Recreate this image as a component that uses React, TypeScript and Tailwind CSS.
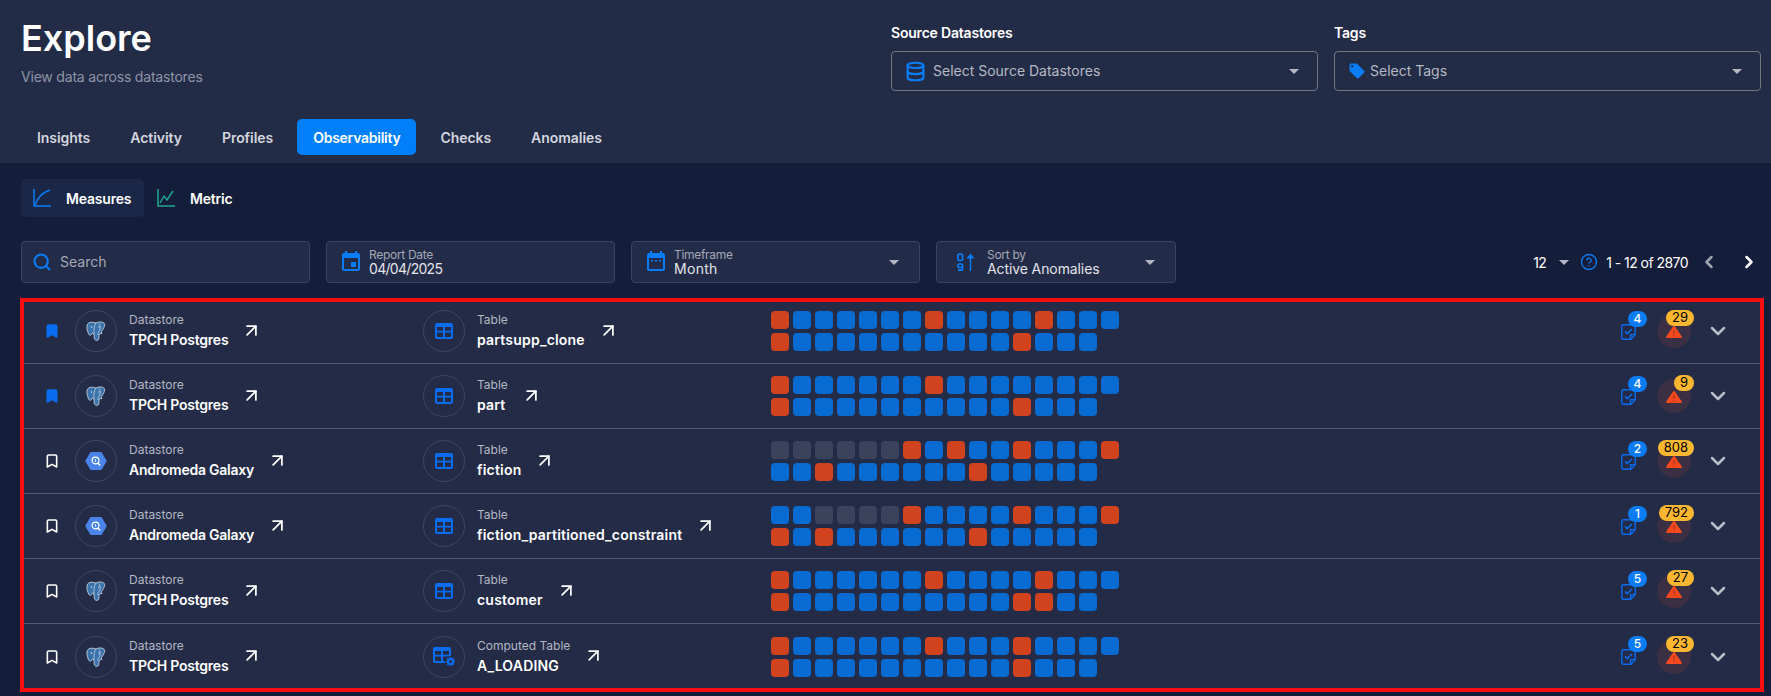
import { ArrowUpRight, Bookmark, ChevronDown, ChevronLeft, ChevronRight, CircleHelp, Database, Search } from 'lucide-react';
import type { ReactNode } from 'react';

const tabs = ['Insights', 'Activity', 'Profiles', 'Observability', 'Checks', 'Anomalies'];

const squareColor: Record<string, string> = {
    O: 'bg-[#d1421e]',
    B: 'bg-[#086bd1]',
    G: 'bg-[#3b435c]',
};

const rows = [
    { saved: true, source: 'pg', store: 'TPCH Postgres', kind: 'Table', name: 'partsupp_clone', top: 'OBBBBBBOBBBBOBBB', bottom: 'OBBBBBBBBBBOBBB', checks: 4, anomalies: 29 },
    { saved: true, source: 'pg', store: 'TPCH Postgres', kind: 'Table', name: 'part', top: 'OBBBBBBOBBBBBBBB', bottom: 'OBBBBBBBBBBOBBB', checks: 4, anomalies: 9 },
    { saved: false, source: 'bq', store: 'Andromeda Galaxy', kind: 'Table', name: 'fiction', top: 'GGGGGGOBOBBOBBBO', bottom: 'BBOBBBBBBOBBBBB', checks: 2, anomalies: 808 },
    { saved: false, source: 'bq', store: 'Andromeda Galaxy', kind: 'Table', name: 'fiction_partitioned_constraint', top: 'BBGGGGOBBBBOBBBO', bottom: 'OBOBBBBBBOBBBBB', checks: 1, anomalies: 792 },
    { saved: false, source: 'pg', store: 'TPCH Postgres', kind: 'Table', name: 'customer', top: 'OBBBBBBOBBBBOBBB', bottom: 'OBBBBBBBBBBOOBB', checks: 5, anomalies: 27 },
    { saved: false, source: 'pg', store: 'TPCH Postgres', kind: 'Computed Table', name: 'A_LOADING', top: 'OBBBBBBOBBBOBBBB', bottom: 'OBBBBBBBBBBOBBB', checks: 5, anomalies: 23 },
];

function Caret() {
    return (
        <svg width="10" height="5" viewBox="0 0 10 5" className="shrink-0">
            <path d="M0 0h10L5 5z" fill="#b4b7c2" />
        </svg>
    );
}

function MeasuresIcon() {
    return (
        <svg width="18" height="18" viewBox="0 0 18 18" fill="none" stroke="#0a7cf5" strokeWidth="1.5">
            <path d="M1 0v17h17" />
            <path d="M2 16C4 10 8 4 17 1" />
        </svg>
    );
}

function MetricIcon() {
    return (
        <svg width="18" height="18" viewBox="0 0 18 18" fill="none" stroke="#1fa58f" strokeWidth="1.5">
            <path d="M1 0v17h17" />
            <path d="M3 14l4-7 3 4 6-9" />
        </svg>
    );
}

function EventIcon() {
    return (
        <svg width="24" height="24" viewBox="0 0 24 24" fill="#0a7cf5">
            <path d="M17 12h-5v5h5v-5zM16 1v2H8V1H6v2H5c-1.11 0-1.99.9-1.99 2L3 19c0 1.1.89 2 2 2h14c1.1 0 2-.9 2-2V5c0-1.1-.9-2-2-2h-1V1h-2zm3 18H5V8h14v11z" />
        </svg>
    );
}

function CalendarIcon() {
    return (
        <svg width="24" height="24" viewBox="0 0 24 24" fill="#0a7cf5">
            <path d="M19 3h-1V1h-2v2H8V1H6v2H5c-1.1 0-2 .9-2 2v14c0 1.1.9 2 2 2h14c1.1 0 2-.9 2-2V5c0-1.1-.9-2-2-2zm0 16H5V8h14v11z" />
            <path d="M7 10h2v1.5H7zM11 10h2v1.5h-2zM15 10h2v1.5h-2z" />
        </svg>
    );
}

function SortIcon() {
    return (
        <svg width="18" height="18" viewBox="0 0 18 18" fill="none" stroke="#0a7cf5">
            <rect x="1" y="1" width="4.5" height="6.5" rx="1" strokeWidth="1.7" />
            <rect x="1" y="11" width="4.5" height="3.5" rx="1" strokeWidth="1.7" />
            <path d="M5.5 13v3.2a1 1 0 0 1-1 1H1" strokeWidth="1.7" />
            <path d="M13.5 18V3" strokeWidth="1.5" />
            <path d="M9.5 5.5L13.5 .5l4 5z" fill="#0a7cf5" stroke="none" />
        </svg>
    );
}

function TagIcon() {
    return (
        <svg width="18" height="18" viewBox="0 0 24 24" fill="#0a7cf5">
            <path d="M21.41 11.58l-9-9C12.05 2.22 11.55 2 11 2H4c-1.1 0-2 .9-2 2v7c0 .55.22 1.05.59 1.42l9 9c.36.36.86.58 1.41.58.55 0 1.05-.22 1.41-.59l7-7c.37-.36.59-.86.59-1.41 0-.55-.23-1.06-.59-1.42zM5.5 7C4.67 7 4 6.33 4 5.5S4.67 4 5.5 4 7 4.67 7 5.5 6.33 7 5.5 7z" />
        </svg>
    );
}

function PostgresIcon() {
    return (
        <svg width="20" height="20" viewBox="0 0 20 20">
            <path d="M10 2C7 .8 3 .8 1.6 3 .3 5 1 9 2.2 12c1 2.5 2.3 3 3.3 1.5l1-1.5c.5.5 1 1 1.5 1l.2 4c.2 2 2.3 3 3.8 2 1.2-.8 1-3 1-5 .5-2 1.5-1 3-1.5-1.2-1-.5-2 .5-3.5 2-3 3-5.5 1.3-7C16 .5 12.5.6 10 2z" fill="#3a72ab" stroke="#d4dde8" strokeWidth=".8" />
            <path d="M10 2C8 5 7.8 8 8 13M12.8 2.5c2.2 2 1.6 6.5-.4 8.5-.6.7-.4 2-.4 3" fill="none" stroke="#d4dde8" strokeWidth=".7" />
            <circle cx="5.5" cy="6" r=".8" fill="#d4dde8" />
            <circle cx="13" cy="6" r=".7" fill="#d4dde8" />
        </svg>
    );
}

function BigQueryIcon() {
    return (
        <svg width="24" height="20" viewBox="0 0 24 20">
            <path d="M1.2 10L6.2 1.4a1 1 0 0 1 .8-.4h10a1 1 0 0 1 .8.4l5 8.6-5 8.6a1 1 0 0 1-.8.4H7a1 1 0 0 1-.8-.4z" fill="#4a84e8" />
            <circle cx="11.5" cy="9.5" r="3.4" fill="none" stroke="#fff" strokeWidth="1.2" />
            <path d="M13.8 12l2.4 2.4" stroke="#fff" strokeWidth="1.4" />
            <path d="M11.5 8v3" stroke="#cfe0fb" strokeWidth="1.1" />
        </svg>
    );
}

function TableIcon() {
    return (
        <svg width="18" height="16" viewBox="0 0 18 16" fill="#0a6cf0">
            <path d="M2 0h14a2 2 0 0 1 2 2v12a2 2 0 0 1-2 2H2a2 2 0 0 1-2-2V2a2 2 0 0 1 2-2zm0 4v3.8h6V4zm8 0v3.8h6V4zM2 9.6V14h6V9.6zm8 0V14h6V9.6z" fillRule="evenodd" />
        </svg>
    );
}

function ComputedTableIcon() {
    return (
        <svg width="23" height="20" viewBox="0 0 23 20" fill="none">
            <path d="M2 0h14a2 2 0 0 1 2 2v12a2 2 0 0 1-2 2H2a2 2 0 0 1-2-2V2a2 2 0 0 1 2-2zm0 4v3.8h6V4zm8 0v3.8h6V4zM2 9.6V14h6V9.6zm8 0V14h6V9.6z" fill="#0a6cf0" fillRule="evenodd" />
            <circle cx="17.5" cy="14.5" r="5.6" fill="#232b47" />
            <circle cx="17.5" cy="14.5" r="2.6" stroke="#0a6cf0" strokeWidth="2" />
            <path d="M17.5 10v1.6M17.5 17.4V19M13 14.5h1.6M20.4 14.5H22M14.3 11.3l1.1 1.1M19.6 16.6l1.1 1.1M14.3 17.7l1.1-1.1M19.6 12.4l1.1-1.1" stroke="#0a6cf0" strokeWidth="1.6" />
        </svg>
    );
}

function CheckNoteIcon() {
    return (
        <svg width="15" height="16" viewBox="0 0 15 16" fill="none" stroke="#0a6cf0" strokeWidth="1.4">
            <path d="M2.2.8h10.6a1.4 1.4 0 0 1 1.4 1.4v8.6L9.8 15.2H2.2a1.4 1.4 0 0 1-1.4-1.4V2.2A1.4 1.4 0 0 1 2.2.8z" />
            <path d="M9.6 15v-4.4H14" />
            <path d="M4 7.4l2.2 2.2L11 5" strokeWidth="1.5" />
        </svg>
    );
}

function WarningIcon() {
    return (
        <svg width="16" height="12" viewBox="0 0 16 12">
            <path d="M7.1.6a1 1 0 0 1 1.8 0l6.9 10a.9.9 0 0 1-.8 1.4H1a.9.9 0 0 1-.8-1.4z" fill="#f4481e" />
            <path d="M7.5 4h1v4h-1zM7.5 9h1v1.2h-1z" fill="#8f2f1c" />
        </svg>
    );
}

function LabeledBox({ icon, label, value, valueClass, caret, className }: { icon: ReactNode; label: string; value: string; valueClass: string; caret?: boolean; className: string }) {
    return (
        <div className={`flex h-[42px] items-center rounded-[4px] border border-[#3a435f] bg-[#222b47] ${className}`}>
            {icon}
            <div className="min-w-0 flex-1">
                <div className="text-[12px] leading-[13px] tracking-[-0.3px] text-[#a4a8b6]">{label}</div>
                <div className={`text-[14px] leading-[16px] text-[#e3e5ea] ${valueClass}`}>{value}</div>
            </div>
            {caret && <Caret />}
        </div>
    );
}

function SelectBox({ label, icon, slot, placeholder }: { label: string; icon: ReactNode; slot: string; placeholder: string }) {
    return (
        <div className="w-[427px]">
            <div className="mb-[8px] h-[20px] text-[14px] font-semibold leading-[20px] tracking-[-0.2px] text-white">{label}</div>
            <div className="flex h-[40px] items-center rounded-[4px] border border-[#72767f] pl-[13px] pr-[18px]">
                <div className={`flex shrink-0 items-center ${slot}`}>{icon}</div>
                <span className="-mt-[2px] flex-1 text-[14px] text-[#b6b9c3]">{placeholder}</span>
                <Caret />
            </div>
        </div>
    );
}

function NameCell({ icon, label, name, nameClass }: { icon: ReactNode; label: string; name: string; nameClass: string }) {
    return (
        <div className="flex w-[348px] shrink-0 items-center">
            <div className="flex size-[42px] shrink-0 items-center justify-center rounded-full border border-[#3d4661]">{icon}</div>
            <div className="ml-[12px]">
                <div className="text-[12px] leading-4 text-[#b4b8c4]">{label}</div>
                <div className={`mt-[2px] text-[14px] font-semibold leading-5 text-white ${nameClass}`}>{name}</div>
            </div>
            <ArrowUpRight size={21} strokeWidth={2} className="-mt-[2px] ml-[13px] shrink-0 text-white" />
        </div>
    );
}

function SquareRow({ pattern }: { pattern: string }) {
    return (
        <div className="flex gap-1">
            {pattern.split('').map((c, i) => (
                <div key={i} className={`size-[18px] rounded-[4px] ${squareColor[c]}`} />
            ))}
        </div>
    );
}

export default function App() {
    return (
        <div className="h-[696px] w-[1771px] overflow-hidden bg-[#141e3a] [font-family:Inter,sans-serif]">
            <header className="h-[163px] bg-[#232c47] pl-[21px] pr-[10px]">
                <div className="flex h-[119px] justify-between">
                    <div className="pt-[16px]">
                        <h1 className="text-[36px] font-semibold leading-[44px] text-white">Explore</h1>
                        <p className="mt-[7px] text-[14px] leading-[20px] tracking-[-0.2px] text-[#8f94a6]">View data across datastores</p>
                    </div>
                    <div className="flex gap-4 pt-[23px]">
                        <SelectBox label="Source Datastores" slot="w-[28px]" icon={<Database size={21} strokeWidth={2.5} className="text-[#0a7cf5]" />} placeholder="Select Source Datastores" />
                        <SelectBox label="Tags" slot="w-[22px]" icon={<TagIcon />} placeholder="Select Tags" />
                    </div>
                </div>
                <nav className="flex gap-2">
                    {tabs.map((t) => (
                        <div
                            key={t}
                            className={
                                t === 'Observability'
                                    ? 'flex h-[36px] items-center rounded-[5px] bg-[#0080f8] px-4 text-[14px] font-semibold tracking-[-0.26px] text-white'
                                    : 'flex h-[36px] items-center rounded-[5px] px-4 text-[14px] font-semibold tracking-[-0.05px] text-[#d3d6de]'
                            }
                        >
                            {t}
                        </div>
                    ))}
                </nav>
            </header>

            <div className="ml-[21px] mt-4 flex h-[38px] items-center">
                <div className="flex h-full w-[123px] items-center rounded-[5px] bg-[#1a2747] pl-[12px]">
                    <MeasuresIcon />
                    <span className="ml-[15px] text-[14px] font-semibold tracking-[-0.2px] text-white">Measures</span>
                </div>
                <div className="ml-[13px] flex items-center">
                    <MetricIcon />
                    <span className="ml-[15px] text-[14px] font-semibold tracking-[-0.2px] text-white">Metric</span>
                </div>
            </div>

            <div className="ml-[21px] mr-[12px] mt-6 flex items-center gap-4">
                <div className="flex h-[42px] w-[289px] items-center rounded-[4px] border border-[#3a435f] bg-[#222b47] pl-[10px]">
                    <Search size={20} strokeWidth={2.5} className="-mt-px text-[#0a7cf5]" />
                    <span className="-mt-[2px] ml-[8px] text-[14px] text-[#a4a8b6]">Search</span>
                </div>
                <LabeledBox className="w-[289px] pl-[12px]" icon={<span className="mr-[6px]"><EventIcon /></span>} label="Report Date" value="04/04/2025" valueClass="tracking-[-0.7px]" />
                <LabeledBox className="w-[289px] pl-[12px] pr-[20px]" icon={<span className="mr-[6px]"><CalendarIcon /></span>} label="Timeframe" value="Month" valueClass="tracking-[0.3px]" caret />
                <LabeledBox className="w-[240px] pl-[20px] pr-[20px]" icon={<span className="mr-[12px]"><SortIcon /></span>} label="Sort by" value="Active Anomalies" valueClass="tracking-[-0.1px]" caret />
                <div className="ml-auto flex items-center text-[14px] tracking-[-0.55px] text-white">
                    <span>12</span>
                    <span className="ml-[13px]"><Caret /></span>
                    <CircleHelp size={18} strokeWidth={1.75} className="ml-[11px] text-[#0a7cf5]" />
                    <span className="ml-[8px]">1 - 12 of 2870</span>
                    <ChevronLeft size={20} strokeWidth={3} className="ml-[11px] text-[#9ea3b1]" />
                    <ChevronRight size={20} strokeWidth={3} className="ml-[20px] text-white" />
                </div>
            </div>

            <section className="relative ml-[20px] mt-[15px] h-[394px] w-[1744px] bg-[#232b47] pt-px">
                {rows.map((r, i) => (
                    <div key={i} className={`flex h-[65px] items-center pl-[27px] ${i < rows.length - 1 ? 'border-b border-[#555b70]' : ''}`}>
                        <div className="-ml-[3px] w-[31px] shrink-0">
                            <Bookmark size={16} strokeWidth={2.4} className={r.saved ? 'fill-[#0a6cf0] text-[#0a6cf0]' : 'text-white'} />
                        </div>
                        <NameCell
                            icon={r.source === 'pg' ? <PostgresIcon /> : <BigQueryIcon />}
                            label="Datastore"
                            name={r.store}
                            nameClass="tracking-[-0.24px]"
                        />
                        <NameCell icon={r.kind === 'Table' ? <TableIcon /> : <ComputedTableIcon />} label={r.kind} name={r.name} nameClass="tracking-[0.2px]" />
                        <div className="flex flex-col gap-1">
                            <SquareRow pattern={r.top} />
                            <SquareRow pattern={r.bottom} />
                        </div>
                        <div className="ml-auto flex items-center pr-[34px]">
                            <div className="relative mt-[1px] h-[16px] w-[15px]">
                                <CheckNoteIcon />
                                <span className="absolute -top-[13px] left-[7px] flex h-[16px] w-[19px] items-center justify-center rounded-full bg-[#0a7cf5] text-[12px] font-medium text-white">{r.checks}</span>
                            </div>
                            <div className="relative ml-[21px] flex size-[34px] items-center justify-center rounded-full bg-[#3a2f43]">
                                <span className="-ml-px mt-[2px]"><WarningIcon /></span>
                                <span className="absolute -right-[3px] -top-[4px] flex h-[16px] items-center justify-center rounded-full bg-[#fbb731] px-[6px] text-[13px] text-black">{r.anomalies}</span>
                            </div>
                            <ChevronDown size={24} strokeWidth={2.5} className="ml-[15px] text-[#b9bdc9]" />
                        </div>
                    </div>
                ))}
                <div className="pointer-events-none absolute inset-0 border-4 border-[#f50f0f]" />
            </section>
        </div>
    );
}
